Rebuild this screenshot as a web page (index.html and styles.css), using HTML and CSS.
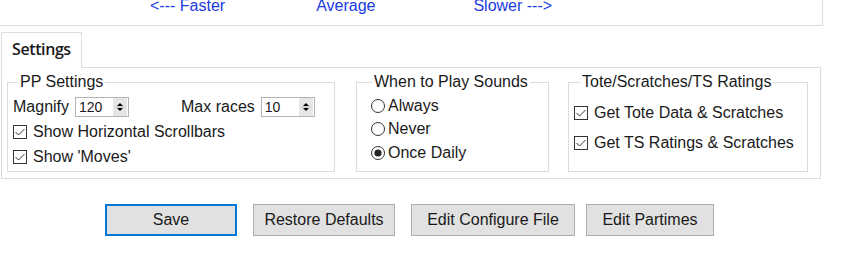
FILE: index.html
```html
<!DOCTYPE html>
<html lang="en">
<head>
    <meta charset="UTF-8">
    <title>Settings</title>
    <link rel="stylesheet" href="styles.css">
</head>
<body>
    <div class="speed-bar">
        <div class="speed-labels">
            <span>&lt;--- Faster</span>
            <span class="avg">Average</span>
            <span class="slow">Slower ---&gt;</span>
        </div>
    </div>

    <div class="tabs">
        <div class="tab">Settings</div>
    </div>

    <div class="tab-panel">
        <fieldset class="group group-pp">
            <legend>PP Settings</legend>
            <div class="row">
                <span>Magnify</span>
                <span class="spin">
                    <span class="spin-value">120</span>
                    <span class="spin-btn">
                        <svg viewBox="0 0 14 18" width="14" height="18">
                            <path d="M4 8h6L7 5z" fill="#000"/>
                            <path d="M2 9h10" stroke="#c4c4c4" stroke-width="1"/>
                            <path d="M4 10h6L7 13z" fill="#000"/>
                        </svg>
                    </span>
                </span>
                <span class="max-label">Max races</span>
                <span class="spin">
                    <span class="spin-value">10</span>
                    <span class="spin-btn">
                        <svg viewBox="0 0 14 18" width="14" height="18">
                            <path d="M4 8h6L7 5z" fill="#000"/>
                            <path d="M2 9h10" stroke="#c4c4c4" stroke-width="1"/>
                            <path d="M4 10h6L7 13z" fill="#000"/>
                        </svg>
                    </span>
                </span>
            </div>
            <label class="row">
                <svg class="check" viewBox="0 0 14 14" width="14" height="14">
                    <rect x="0.5" y="0.5" width="13" height="13" fill="#fff" stroke="#333"/>
                    <path d="M2.5 7L5.5 10l6-6" fill="none" stroke="#333" stroke-width="1"/>
                </svg>
                Show Horizontal Scrollbars
            </label>
            <label class="row">
                <svg class="check" viewBox="0 0 14 14" width="14" height="14">
                    <rect x="0.5" y="0.5" width="13" height="13" fill="#fff" stroke="#333"/>
                    <path d="M2.5 7L5.5 10l6-6" fill="none" stroke="#333" stroke-width="1"/>
                </svg>
                Show 'Moves'
            </label>
        </fieldset>

        <fieldset class="group group-sounds">
            <legend>When to Play Sounds</legend>
            <label class="row radio-row">
                <svg class="radio" viewBox="0 0 14 14" width="14" height="14">
                    <circle cx="7" cy="7" r="6.5" fill="#fff" stroke="#333"/>
                </svg>
                Always
            </label>
            <label class="row radio-row">
                <svg class="radio" viewBox="0 0 14 14" width="14" height="14">
                    <circle cx="7" cy="7" r="6.5" fill="#fff" stroke="#333"/>
                </svg>
                Never
            </label>
            <label class="row radio-row">
                <svg class="radio" viewBox="0 0 14 14" width="14" height="14">
                    <circle cx="7" cy="7" r="6.5" fill="#fff" stroke="#333"/>
                    <circle cx="7" cy="7" r="3.6" fill="#222"/>
                </svg>
                Once Daily
            </label>
        </fieldset>

        <fieldset class="group group-tote">
            <legend>Tote/Scratches/TS Ratings</legend>
            <label class="row tote-row">
                <svg class="check" viewBox="0 0 14 14" width="14" height="14">
                    <rect x="0.5" y="0.5" width="13" height="13" fill="#fff" stroke="#333"/>
                    <path d="M2.5 7L5.5 10l6-6" fill="none" stroke="#333" stroke-width="1"/>
                </svg>
                Get Tote Data &amp; Scratches
            </label>
            <label class="row tote-row">
                <svg class="check" viewBox="0 0 14 14" width="14" height="14">
                    <rect x="0.5" y="0.5" width="13" height="13" fill="#fff" stroke="#333"/>
                    <path d="M2.5 7L5.5 10l6-6" fill="none" stroke="#333" stroke-width="1"/>
                </svg>
                Get TS Ratings &amp; Scratches
            </label>
        </fieldset>
    </div>

    <div class="buttons">
        <button class="btn btn-save">Save</button>
        <button class="btn btn-restore">Restore Defaults</button>
        <button class="btn btn-config">Edit Configure File</button>
        <button class="btn btn-partimes">Edit Partimes</button>
    </div>
</body>
</html>
```

FILE: styles.css
```css
:root {
    --line: #dcdcdc;
    --text: #1a1a1a;
    --link: #1a3ce0;
    --btn-bg: #e1e1e1;
    --btn-border: #adadad;
    --focus: #0078d7;
}

* {
    margin: 0;
    padding: 0;
    box-sizing: border-box;
}

body {
    width: 847px;
    height: 263px;
    overflow: hidden;
    background: #fff;
    color: var(--text);
    font-family: "Liberation Sans", Arial, sans-serif;
    font-size: 16px;
    line-height: 18px;
}

/* top speed strip */
.speed-bar {
    width: 823px;
    height: 26px;
    border-right: 1px solid var(--line);
    border-bottom: 1px solid var(--line);
    overflow: hidden;
}

.speed-labels {
    display: flex;
    margin-top: -3px;
    padding-left: 150px;
    color: var(--link);
}

.speed-labels .avg {
    margin-left: 91px;
}

.speed-labels .slow {
    margin-left: 98px;
}

/* tab header */
.tabs {
    display: flex;
    margin-top: 6px;
    padding-left: 1px;
}

.tab {
    position: relative;
    z-index: 1;
    width: 81px;
    height: 36px;
    margin-bottom: -1px;
    padding: 7px 0 0 10px;
    background: #fff;
    border: 1px solid var(--line);
    border-bottom: none;
    font-family: "Open Sans", "Liberation Sans", sans-serif;
    font-weight: 600;
    font-size: 16px;
    letter-spacing: -0.4px;
}

/* tab body */
.tab-panel {
    display: flex;
    align-items: stretch;
    width: 820px;
    height: 112px;
    margin-left: 1px;
    padding: 5px 0 0 5px;
    border: 1px solid var(--line);
}

.group {
    border: 1px solid var(--line);
    height: 99px;
    padding: 3px 4px 2px 5px;
}

.group legend {
    padding: 0 2px;
    line-height: 18px;
}

.group-pp {
    width: 328px;
}

.group-pp legend {
    margin-left: 5px;
}

.group-sounds {
    width: 193px;
    margin-left: 21px;
    padding-left: 14px;
}

.group-sounds legend {
    margin-left: 1px;
}

.group-tote {
    width: 240px;
    margin-left: 19px;
    padding-top: 7px;
}

.group-tote legend {
    margin-left: 6px;
}

.row {
    display: flex;
    align-items: center;
    height: 25px;
    white-space: nowrap;
}

.radio-row {
    height: 23.5px;
}

.tote-row {
    height: 30px;
}

.check {
    flex: none;
    margin-right: 6px;
}

.radio {
    flex: none;
    margin-right: 3px;
}

/* numeric spin boxes */
.spin {
    display: inline-flex;
    align-items: center;
    width: 54px;
    height: 20px;
    margin-left: 6px;
    padding: 0 1px 0 3px;
    border: 1px solid #b4b4b4;
    background: #fff;
}

.spin-value {
    flex: 1;
    font-size: 14px;
}

.spin-btn {
    display: flex;
    background: #e6e6e6;
    height: 18px;
}

.max-label {
    margin-left: 52px;
}

/* bottom buttons */
.buttons {
    display: flex;
    margin-top: 25px;
    padding-left: 105px;
}

.btn {
    height: 32px;
    background: var(--btn-bg);
    border: 1px solid var(--btn-border);
    color: var(--text);
    font-family: "Liberation Sans", Arial, sans-serif;
    font-size: 16px;
}

.btn-save {
    width: 132px;
    border: 2px solid var(--focus);
}

.btn-restore {
    width: 142px;
    margin-left: 16px;
}

.btn-config {
    width: 164px;
    margin-left: 16px;
}

.btn-partimes {
    width: 128px;
    margin-left: 11px;
}
```
